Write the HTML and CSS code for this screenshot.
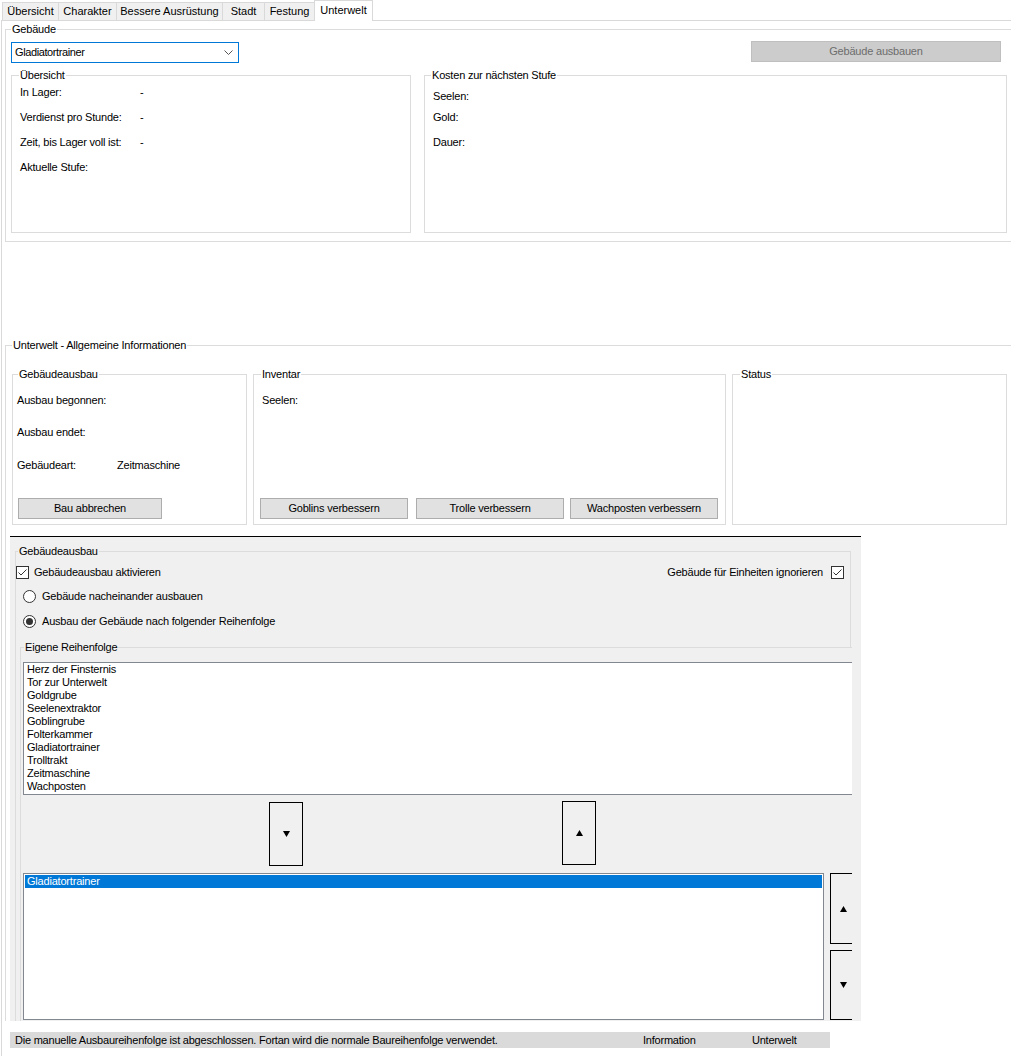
FILE: index.html
```html
<!DOCTYPE html>
<html lang="de">
<head>
<meta charset="utf-8">
<title>Unterwelt</title>
<link rel="stylesheet" href="styles.css">
</head>
<body>
<div class="tabs">
  <div class="tab t1">Übersicht</div>
  <div class="tab t2">Charakter</div>
  <div class="tab t3">Bessere Ausrüstung</div>
  <div class="tab t4">Stadt</div>
  <div class="tab t5">Festung</div>
  <div class="tab t6 active">Unterwelt</div>
</div>
<div class="page">
  <fieldset class="grp g-main">
    <legend>Gebäude</legend>
    <div class="row1">
      <div class="combo"><span>Gladiatortrainer</span>
        <svg width="9" height="5" viewBox="0 0 9 5"><polyline points="0.5,0.5 4.5,4.5 8.5,0.5" fill="none" stroke="#555" stroke-width="1"/></svg>
      </div>
      <div class="btn btn-disabled">Gebäude ausbauen</div>
    </div>
    <div class="row2">
      <fieldset class="grp g-ov">
        <legend>Übersicht</legend>
        <div class="kv first"><span class="k">In Lager:</span><span>-</span></div>
        <div class="kv"><span class="k">Verdienst pro Stunde:</span><span>-</span></div>
        <div class="kv"><span class="k">Zeit, bis Lager voll ist:</span><span>-</span></div>
        <div class="kv"><span class="k">Aktuelle Stufe:</span></div>
      </fieldset>
      <fieldset class="grp g-cost">
        <legend>Kosten zur nächsten Stufe</legend>
        <div class="cl c1">Seelen:</div>
        <div class="cl c2">Gold:</div>
        <div class="cl c3">Dauer:</div>
      </fieldset>
    </div>
  </fieldset>

  <fieldset class="grp g-mid">
    <legend>Unterwelt - Allgemeine Informationen</legend>
    <div class="row3">
      <fieldset class="grp g-build">
        <legend>Gebäudeausbau</legend>
        <div class="bk b1"><span class="k">Ausbau begonnen:</span></div>
        <div class="bk b2"><span class="k">Ausbau endet:</span></div>
        <div class="bk b3"><span class="k">Gebäudeart:</span><span>Zeitmaschine</span></div>
        <div class="btn btn-cancel">Bau abbrechen</div>
      </fieldset>
      <fieldset class="grp g-inv">
        <legend>Inventar</legend>
        <div class="inv-label">Seelen:</div>
        <div class="inv-btns">
          <div class="btn btn-up">Goblins verbessern</div>
          <div class="btn btn-up b-troll">Trolle verbessern</div>
          <div class="btn btn-up b-wach">Wachposten verbessern</div>
        </div>
      </fieldset>
      <fieldset class="grp g-status">
        <legend>Status</legend>
      </fieldset>
    </div>

    <div class="panel">
      <fieldset class="grp g-auto">
        <legend>Gebäudeausbau</legend>
        <div class="chkrow">
          <div class="chk">
            <svg width="13" height="13" viewBox="0 0 13 13"><rect x="0.5" y="0.5" width="12" height="12" fill="#fff" stroke="#333"/><polyline points="2.5,6.5 5,9 10.5,3.5" fill="none" stroke="#333" stroke-width="1"/></svg>
            <span class="chk-l">Gebäudeausbau aktivieren</span>
          </div>
          <div class="chk">
            <span class="chk-r">Gebäude für Einheiten ignorieren</span>
            <svg width="13" height="13" viewBox="0 0 13 13"><rect x="0.5" y="0.5" width="12" height="12" fill="#fff" stroke="#333"/><polyline points="2.5,6.5 5,9 10.5,3.5" fill="none" stroke="#333" stroke-width="1"/></svg>
          </div>
        </div>
        <div class="radio r1">
          <svg width="13" height="13" viewBox="0 0 13 13"><circle cx="6.5" cy="6.5" r="6" fill="#fff" stroke="#333"/></svg>
          <span>Gebäude nacheinander ausbauen</span>
        </div>
        <div class="radio r2">
          <svg width="13" height="13" viewBox="0 0 13 13"><circle cx="6.5" cy="6.5" r="6" fill="#fff" stroke="#333"/><circle cx="6.5" cy="6.5" r="3.5" fill="#333"/></svg>
          <span>Ausbau der Gebäude nach folgender Reihenfolge</span>
        </div>

        <fieldset class="grp g-order">
          <legend>Eigene Reihenfolge</legend>
          <div class="list list1">
            <div class="item">Herz der Finsternis</div>
            <div class="item">Tor zur Unterwelt</div>
            <div class="item">Goldgrube</div>
            <div class="item">Seelenextraktor</div>
            <div class="item">Goblingrube</div>
            <div class="item">Folterkammer</div>
            <div class="item">Gladiatortrainer</div>
            <div class="item">Trolltrakt</div>
            <div class="item">Zeitmaschine</div>
            <div class="item">Wachposten</div>
          </div>
          <div class="arrows">
            <div class="abtn a-down"><svg width="7" height="6" viewBox="0 0 7 6"><polygon points="0,0 7,0 3.5,6" fill="#000"/></svg></div>
            <div class="abtn a-up"><svg width="7" height="6" viewBox="0 0 7 6"><polygon points="3.5,0 7,6 0,6" fill="#000"/></svg></div>
          </div>
          <div class="row-list2">
            <div class="list list2">
              <div class="item sel">Gladiatortrainer</div>
            </div>
            <div class="side">
              <div class="abtn s-up"><svg width="7" height="6" viewBox="0 0 7 6"><polygon points="3.5,0 7,6 0,6" fill="#000"/></svg></div>
              <div class="abtn s-down"><svg width="7" height="6" viewBox="0 0 7 6"><polygon points="0,0 7,0 3.5,6" fill="#000"/></svg></div>
            </div>
          </div>
        </fieldset>
      </fieldset>
    </div>
  </fieldset>

  <div class="statusbar">
    <span class="s-msg">Die manuelle Ausbaureihenfolge ist abgeschlossen. Fortan wird die normale Baureihenfolge verwendet.</span>
    <span class="s-info">Information</span>
    <span class="s-area">Unterwelt</span>
  </div>
</div>
</body>
</html>
```
FILE: styles.css
```css
* { box-sizing: border-box; }
html, body { margin: 0; padding: 0; }
body {
  width: 1011px;
  height: 1056px;
  overflow: hidden;
  background: #fff;
  font-family: "Liberation Sans", Arial, sans-serif;
  font-size: 11px;
  line-height: 13px;
  letter-spacing: -0.2px;
  color: #000;
}

/* tabs */
.tabs { display: flex; align-items: flex-end; height: 20px; padding-left: 2px; }
.tab {
  height: 18px;
  border: 1px solid #d9d9d9;
  border-bottom: none;
  background: #f0f0f0;
  margin-right: -1px;
  text-align: center;
  line-height: 16px;
  white-space: nowrap;
  letter-spacing: 0;
}
.tab.active { height: 21px; background: #fff; margin-bottom: -1px; position: relative; z-index: 1; line-height: 19px; }
.t1 { width: 57px; }
.t2 { width: 59px; }
.t3 { width: 107px; }
.t4 { width: 43px; }
.t5 { width: 51px; }
.t6 { width: 59px; }

.page { border-top: 1px solid #d9d9d9; border-left: 1px solid #d9d9d9; margin-left: 1px; height: 1036px; }

/* group boxes */
.grp { margin: 0; padding: 0; border: 1px solid #dcdcdc; min-width: 0; }
.grp > legend { padding: 0 1px; line-height: 13px; font-size: 11px; }

.g-main { margin: 2px 0 0 3px; width: 1030px; height: 219px; }
.g-main > legend { margin-left: 5px; }

.row1 { display: flex; align-items: flex-start; margin: 6px 0 0 5px; }
.combo {
  flex-shrink: 0;
  width: 228px; height: 21px;
  border: 1px solid #0078d7;
  background: #fff;
  display: flex; align-items: center; justify-content: space-between;
  padding: 0 5px 0 3px;
  letter-spacing: -0.4px;
}
.combo svg { display: block; }

.btn {
  flex-shrink: 0;
  height: 21px;
  background: #e1e1e1;
  border: 1px solid #adadad;
  text-align: center;
  line-height: 19px;
  white-space: nowrap;
}
.btn-disabled { margin: -1px 0 0 512px; width: 250px; background: #cccccc; border-color: #bfbfbf; color: #6d6d6d; }

.row2 { display: flex; gap: 13px; margin: 6px 0 0 5px; }
.g-ov { width: 400px; height: 164px; flex-shrink: 0; }
.g-ov > legend { margin-left: 7px; }
.g-cost { width: 583px; height: 164px; flex-shrink: 0; }
.g-cost > legend { margin-left: 6px; }

.kv { display: flex; padding-left: 8px; margin-top: 12px; }
.kv.first { margin-top: 4px; }
.kv .k { width: 120px; }

.cl { padding-left: 8px; }
.c1 { margin-top: 8px; }
.c2 { margin-top: 8px; }
.c3 { margin-top: 12px; }

/* middle */
.g-mid { margin: 97px 0 0 3px; width: 1030px; height: 682px; border-bottom: none; }
.g-mid > legend { margin-left: 6px; }
.row3 { display: flex; margin: 16px 0 0 6px; }
.g-build { width: 235px; height: 157px; flex-shrink: 0; }
.g-build > legend { margin-left: 5px; }
.g-inv { width: 473px; height: 157px; margin-left: 6px; flex-shrink: 0; }
.g-inv > legend { margin-left: 7px; }
.g-status { width: 275px; height: 157px; margin-left: 6px; flex-shrink: 0; }
.g-status > legend { margin-left: 7px; }

.bk { display: flex; padding-left: 4px; }
.bk .k { width: 100px; }
.b1 { margin-top: 13px; }
.b2 { margin-top: 19px; }
.b3 { margin-top: 20px; }
.btn-cancel { width: 144px; margin: 26px 0 0 5px; }

.inv-label { padding-left: 8px; margin-top: 13px; }
.inv-btns { display: flex; margin: 91px 0 0 6px; }
.btn-up { width: 148px; }
.b-troll { margin-left: 8px; }
.b-wach { margin-left: 6px; }

/* bottom panel */
.panel {
  margin: 11px 0 0 4px;
  width: 851px; height: 485px;
  border-top: 1px solid #000;
  background: #f0f0f0;
  overflow: hidden;
}
.g-auto { margin: 8px 0 0 5px; width: 836px; height: 600px; border-bottom: none; }
.g-auto > legend { margin-left: 2px; }

.chkrow { display: flex; justify-content: space-between; align-items: center; height: 13px; margin-top: 8px; padding-right: 6px; }
.chk { display: flex; align-items: center; }
.chk svg { display: block; }
.chk-l { margin-left: 5px; }
.chk-r { margin-right: 8px; }

.radio { display: flex; align-items: center; height: 13px; margin-left: 7px; }
.radio svg { display: block; }
.radio span { margin-left: 6px; }
.r1 { margin-top: 11px; }
.r2 { margin-top: 12px; }

.g-order {
  margin: 13px 0 0 4px;
  width: 832px; height: 420px;
  border-right: none; border-bottom: none;
  background: #f0f0f0;
  overflow: hidden;
  position: relative;
}
.g-order > legend { margin-left: 3px; }

.list { background: #fff; border: 1px solid #828790; flex-shrink: 0; }
.list1 { margin: 8px 0 0 2px; width: 840px; height: 133px; padding-left: 2px; }
.item { line-height: 13px; height: 13px; padding-left: 1px; white-space: nowrap; }

.arrows { display: flex; align-items: flex-start; margin-top: 6px; }
.abtn { flex-shrink: 0; border: 1px solid #000; background: #f0f0f0; display: flex; align-items: center; justify-content: center; }
.abtn svg { display: block; }
.a-down { width: 34px; height: 64px; margin: 1px 0 0 248px; }
.a-up { width: 34px; height: 64px; margin-left: 259px; }

.row-list2 { display: flex; margin-top: 7px; }
.list2 { margin-left: 2px; width: 801px; height: 147px; padding: 1px; }
.item.sel { background: #0078d7; color: #fff; padding-left: 2px; }
.side { flex-shrink: 0; margin-left: 6px; display: flex; flex-direction: column; }
.s-up { width: 34px; height: 71px; padding-right: 8px; }
.s-down { width: 34px; height: 70px; margin-top: 6px; padding-right: 8px; }

/* status bar */
.statusbar {
  margin: 11px 0 0 8px;
  width: 820px; height: 16px;
  background: #dadada;
  display: flex; align-items: center;
  letter-spacing: -0.22px;
  white-space: nowrap;
}
.s-msg { width: 633px; padding-left: 5px; flex-shrink: 0; }
.s-info { width: 109px; flex-shrink: 0; }
```
